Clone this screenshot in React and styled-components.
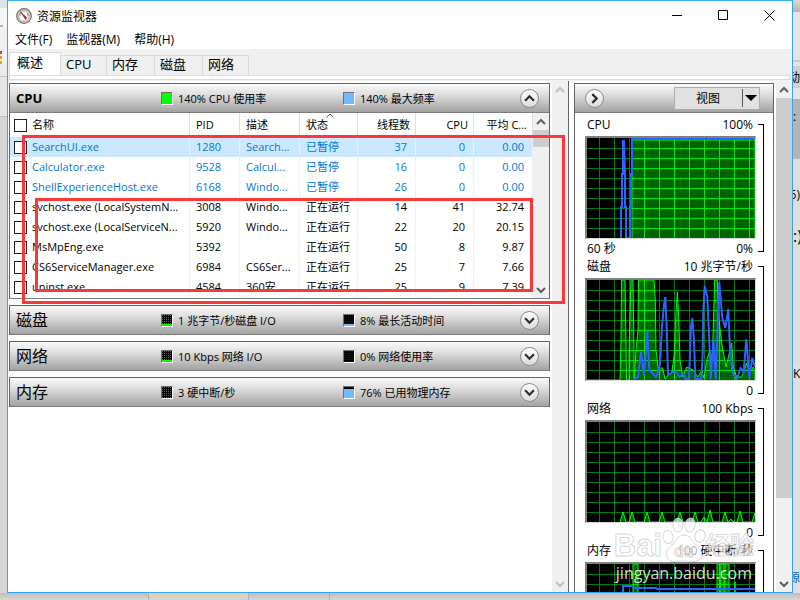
import React from 'react';
import styled, { createGlobalStyle, css } from 'styled-components';

const GlobalStyle = createGlobalStyle`
  * { box-sizing: border-box; }

  body {
    margin: 0;
    color: #000;
    font-family: "Open Sans", "Noto Sans CJK SC", sans-serif;
    font-size: 12px;
  }

  button {
    margin: 0;
    padding: 0;
    color: inherit;
    font: inherit;
  }
`;

const Desktop = styled.div`
  display: grid;
  grid-template-columns: 7px minmax(0, 1fr) 7px;
  grid-template-rows: minmax(0, 1fr) 7px;
  height: 100vh;
  overflow: hidden;
  background: #d6d6d6;
`;

const Strip = styled.div`
  display: flex;
  flex-direction: column;
  overflow: hidden;
`;

const StripPart = styled.div`
  flex: 0 0 auto;
  height: ${({ $height }) => $height}px;
  padding-top: ${({ $top }) => $top || 0}px;
  background: ${({ $bg }) => $bg};
  color: ${({ $color }) => $color || '#000'};
  font-size: ${({ $size }) => $size || 12}px;
  line-height: 20px;
  white-space: nowrap;
  overflow: hidden;
`;

const StripText = styled.span`
  display: flex;
  justify-content: ${({ $end }) => ($end ? 'flex-end' : 'flex-start')};
`;

const Shelf = styled.div`
  grid-column: 1 / -1;
  display: grid;
  grid-template-columns: 149px 100px 81px 1fr;
  background: linear-gradient(#bcbcbc, #d8d8d8);

  > span { border-right: 1px solid #b0b0b0; }
  > span:nth-child(2) { background: #d9d1c4; }
  > span:last-child { border: 0; }
`;

const Window = styled.main`
  position: relative;
  display: flex;
  flex-direction: column;
  min-height: 0;
  border: 1px solid #3aa5ec;
  background: #f0f0f0;
  overflow: hidden;
`;

const TitleBar = styled.header`
  display: flex;
  align-items: center;
  flex: 0 0 29px;
  padding-left: 8px;
  background: #fff;
`;

const Title = styled.h1`
  flex: 1;
  margin: 0 0 0 5px;
  font-size: 12px;
  font-weight: 400;
`;

const WindowButton = styled.button`
  display: flex;
  align-items: center;
  justify-content: center;
  width: 46px;
  height: 28px;
  border: 0;
  background: transparent;
`;

const MenuBar = styled.nav`
  display: flex;
  gap: 14px;
  flex: 0 0 19px;
  min-height: 0;
  padding-left: 7px;
  background: #fff;
`;

const MenuItem = styled.button`
  height: 19px;
  border: 0;
  background: transparent;
  line-height: 20px;
`;

const TabBand = styled.div`
  display: flex;
  align-items: flex-end;
  flex: 0 0 26px;
  padding-left: 1px;
`;

const Tab = styled.button`
  width: ${({ $width }) => $width}px;
  height: 20px;
  padding: 0 0 2px 5px;
  border: 1px solid #d9d9d9;
  border-left: 0;
  border-bottom: 0;
  background: #f0f0f0;
  font-size: 13px;
  line-height: 17px;
  text-align: left;

  &[aria-selected='true'] {
    height: 23px;
    padding: 0 0 4px 7px;
    border-left: 1px solid #d9d9d9;
    background: #fff;
  }
`;

const TabPage = styled.div`
  flex: 0 0 5px;
  margin: 0 2px 1px 1px;
  border: 1px solid #dcdcdc;
  background: #fff;
`;

const Content = styled.div`
  display: flex;
  flex: 1;
  min-height: 0;
  background: #fff;
`;

const LeftPane = styled.div`
  display: flex;
  flex: 1;
  min-width: 0;
  border-right: 1px solid #646464;
`;

const Sections = styled.div`
  display: flex;
  flex: 1;
  flex-direction: column;
  gap: 6px;
  min-width: 0;
  padding: 2px 2px 0 1px;
`;

const Section = styled.section`
  border: 1px solid #646464;
  border-bottom: 0;
`;

const barGradient = css`
  border-bottom: 1px solid #7c7c7c;
  background: linear-gradient(#fafafa, #e0e0e0 35%, #a2a2a2);
`;

const SectionBar = styled.div`
  display: grid;
  grid-template-columns: 145px 182px 1fr auto;
  align-items: center;
  height: 29px;
  padding: 0 10px 0 6px;
  ${barGradient}
`;

const SectionTitle = styled.h2`
  margin: 0;
  font-size: ${({ $strong }) => ($strong ? 13 : 16)}px;
  font-weight: ${({ $strong }) => ($strong ? 700 : 400)};
  line-height: 24px;
`;

const Legend = styled.span`
  display: flex;
  align-items: center;
  gap: 5px;
  font-size: 11px;
  white-space: nowrap;
`;

const Swatch = styled.i`
  width: 12px;
  height: 13px;
  border: 1px solid #fff;
  border-top-color: #707070;
  border-left-color: #707070;
  background:
    linear-gradient(to top, ${({ $color }) => $color} ${({ $level }) => $level}px, transparent 0),
    conic-gradient(#000 75%, transparent 0) 0 0 / 2px 2px,
    ${({ $dark }) => $dark};
`;

const RoundButton = styled.button`
  display: flex;
  align-items: center;
  justify-content: center;
  width: 19px;
  height: 19px;
  border: 1px solid #8a8a8a;
  border-radius: 50%;
  background: linear-gradient(#fff, #dadada);
  color: #2c2c2c;
`;

const ListArea = styled.div`
  display: flex;
  height: 186px;
  border-bottom: 1px solid #7c7c7c;
`;

const TableClip = styled.div`
  flex: 1;
  min-width: 0;
  overflow: hidden;
`;

const Table = styled.table`
  width: 100%;
  border-collapse: separate;
  border-spacing: 0;
  table-layout: fixed;
  font-size: 11px;
`;

const Cell = styled.td`
  height: 20px;
  padding: 0 ${({ $right }) => ($right ? 8 : 6)}px 0 6px;
  border-right: 1px solid #e8f1fa;
  line-height: 20px;
  text-align: ${({ $right }) => ($right ? 'right' : 'left')};
  white-space: nowrap;
  overflow: hidden;
  text-overflow: ellipsis;
`;

const HeadCell = styled(Cell)`
  position: relative;
  height: 24px;
  padding: 0 5px 0 6px;
  border-right-color: #e0e0e0;
  font-weight: 400;
  line-height: 24px;
`;

const NameCell = styled.label`
  display: flex;
  align-items: center;
  gap: 5px;
  margin-left: -2px;

  > span {
    overflow: hidden;
    text-overflow: ellipsis;
  }
`;

const Check = styled.input`
  appearance: none;
  flex: 0 0 13px;
  height: 13px;
  margin: 0;
  border: 1px solid #222;
  background: #fff;
`;

const Row = styled.tr`
  color: ${({ $paused }) => ($paused ? '#0078d7' : '#000')};
  background: ${({ $selected }) => ($selected ? '#cce8ff' : 'transparent')};
`;

const SortMark = styled.svg`
  position: absolute;
  top: 0;
  left: 26px;
`;

const Track = styled.div`
  display: flex;
  flex: 0 0 ${({ $width }) => $width}px;
  flex-direction: column;
  background: #f0f0f0;
`;

const Thumb = styled.div`
  flex: 0 0 ${({ $length }) => $length};
  background: #cdcdcd;
`;

const Arrow = styled.button`
  display: flex;
  align-items: center;
  justify-content: center;
  flex: 0 0 17px;
  border: 0;
  background: transparent;
  color: ${({ $dim }) => ($dim ? '#bfbfbf' : '#606060')};

  &:last-child { margin-top: auto; }
`;

const RightPane = styled.aside`
  display: flex;
  flex: 0 0 223px;
  gap: 2px;
  padding-left: 5px;
`;

const GraphPanel = styled.div`
  flex: 1;
  min-width: 0;
  margin-top: 2px;
  border: 1px solid #646464;
  border-bottom: 0;
  overflow: hidden;
`;

const GraphBar = styled.div`
  display: flex;
  align-items: center;
  justify-content: space-between;
  height: 29px;
  margin-bottom: 3px;
  padding: 0 13px 0 10px;
  ${barGradient}
`;

const ViewButton = styled.button`
  display: flex;
  align-items: center;
  width: 86px;
  height: 23px;
  border: 1px solid #adadad;
  background: #e1e1e1;

  > span:first-child { flex: 1; padding-right: 1px; }
`;

const ViewArrow = styled.span`
  display: flex;
  align-items: center;
  height: 18px;
  padding: 0 2px;
  border-left: 1px solid #555;
`;

const GraphBlock = styled.figure`
  display: flex;
  gap: 2px;
  margin: 0;
  padding: 0 9px 0 10px;
`;

const GraphMain = styled.div`
  flex: 1;
  min-width: 0;
`;

const GraphLabels = styled.div`
  display: flex;
  justify-content: space-between;
  height: ${({ $foot }) => ($foot ? 19 : 20)}px;
  padding: 0 3px 0 2px;
  line-height: ${({ $foot }) => ($foot ? 19 : 18)}px;
  white-space: nowrap;
`;

const GraphFrame = styled.div`
  height: 103px;
  border: 1px solid #dcdcdc;
  border-top: 2px solid #808080;
  border-left: 2px solid #808080;
  background: #000;

  > svg { display: block; width: 100%; height: 100px; }
`;

const Bracket = styled.div`
  width: 6px;
  margin: 8px 0 6px;
  border: 1px solid #000;
  border-left: 0;
`;

const Mark = styled.div`
  position: absolute;
  top: ${({ $top }) => $top}px;
  left: ${({ $left }) => $left}px;
  width: ${({ $width }) => $width}px;
  height: ${({ $height }) => $height}px;
  border: 3px solid #fb3737;
  pointer-events: none;
`;

const Watermark = styled.div`
  position: absolute;
  right: 38px;
  bottom: 9px;
  display: flex;
  flex-direction: column;
  align-items: center;
  color: rgba(255, 255, 255, 0.6);
  pointer-events: none;
`;

const Brand = styled.div`
  display: flex;
  align-items: flex-end;
  height: 46px;
  font-family: "Liberation Sans", "Noto Sans CJK SC", sans-serif;
  font-size: 31px;
  font-weight: 700;
  line-height: 34px;
  -webkit-text-stroke: 1px rgba(205, 205, 205, 0.8);

  > span:last-child { font-size: 24px; line-height: 34px; }
`;

const BrandUrl = styled.div`
  color: rgba(255, 255, 255, 0.85);
  font-size: 16px;
  line-height: 20px;
`;

const processes = [
  ['SearchUI.exe', '1280', 'Search...', '已暂停', '37', '0', '0.00'],
  ['Calculator.exe', '9528', 'Calcul...', '已暂停', '16', '0', '0.00'],
  ['ShellExperienceHost.exe', '6168', 'Windo...', '已暂停', '26', '0', '0.00'],
  ['svchost.exe (LocalSystemN...', '3008', 'Windo...', '正在运行', '14', '41', '32.74'],
  ['svchost.exe (LocalServiceN...', '5920', 'Windo...', '正在运行', '22', '20', '20.15'],
  ['MsMpEng.exe', '5392', '', '正在运行', '50', '8', '9.87'],
  ['CS6ServiceManager.exe', '6984', 'CS6Ser...', '正在运行', '25', '7', '7.66'],
  ['uninst.exe', '4584', '360安...', '正在运行', '25', '9', '7.39'],
];

const sections = [
  {
    title: '磁盘',
    first: { text: '1 兆字节/秒磁盘 I/O', color: '#00ff00', dark: '#00a000', level: 2 },
    second: { text: '8% 最长活动时间', color: '#74b8ff', dark: '#0000d0', level: 2 },
  },
  {
    title: '网络',
    first: { text: '10 Kbps 网络 I/O', color: '#00ff00', dark: '#00a000', level: 2 },
    second: { text: '0% 网络使用率', color: '#74b8ff', dark: '#0000d0', level: 0 },
  },
  {
    title: '内存',
    first: { text: '3 硬中断/秒', color: '#00ff00', dark: '#00a000', level: 0 },
    second: { text: '76% 已用物理内存', color: '#74b8ff', dark: '#0000d0', level: 9 },
  },
];

const netPeaks = [[36, 90], [45, 90], [60, 90], [75, 90], [93, 90], [108, 90], [117, 95], [123, 88], [138, 90], [144, 97], [153, 89], [168, 91]];

const graphs = [
  {
    id: 'cpu',
    name: 'CPU',
    max: '100%',
    time: '60 秒',
    min: '0%',
    area: '45,100 45,2 168,2 168,100',
    line: '34,100 34,69 35,69 35,36 36,36 36,3 37,3 38,36 38,69 39,69 39,100 43,100 43,69 44,69 44,36 45,36 45,1 168,1',
  },
  {
    id: 'disk',
    name: '磁盘',
    max: '10 兆字节/秒',
    min: '0',
    area: '0,100 33,100 34,62 34.5,0 38,0 39,62 39.5,100 42,100 42,70 44,0 46,0 47,70 47,99 49,70 51,50 51.5,0 67,0 68.3,20 69,70 70.3,80 71.3,88 75.7,88 78,99 81,95 84.7,93 87,77 89,33 90.3,12 91.7,37 93,80 95.7,97 99.7,87 106,90 111,97 114.7,90 117,98 119.7,80 123,70 125.3,80 127,23 127.7,0 130.3,0 131.7,37 134.7,63 139,87 144.7,63 146.3,87 149.7,97 154.7,97 159.7,83 163,92 166.3,87 168,92 168,100',
    line: '47,99 51,97 54,72 57,95 60.3,51 62.3,90 69,97 71,93 73,83 75,47 76.7,27 78.3,17 79.7,47 81,95 88,91 93,97 96,93 98.7,99 102,99 104,47 105.3,38 107,60 108.3,99 114.3,99 115.7,73 116.3,30 117.7,6 120.3,17 121.7,47 123.7,99 126.3,60 128.7,99 130.3,57 132.3,2 134,23 135.3,38 138.3,48 141.3,29 143,70 145.7,93 149.7,99 153.7,88 156.7,92 159.3,59 162.3,98 165.3,78 168,87',
  },
  {
    id: 'network',
    name: '网络',
    max: '100 Kbps',
    min: '0',
    area: netPeaks.map(([x, y]) => `${x - 3},100 ${x},${y} ${x + 3},100`).join(' '),
  },
  {
    id: 'memory',
    name: '内存',
    max: '100 硬中断/秒',
    min: '0',
    area: '0,100 46,100 46,0 51,0 51,100 130,100 130,0 133,0 133,100 134,0 137,0 137,100 138,0 142,0 142,100 147,100 148,18 149,100',
    line: '36,100 36,22 46,22 47,24 69,24 70,25 168,25',
  },
];

const chevrons = {
  up: 'M1 7 L5 3 L9 7',
  down: 'M1 3 L5 7 L9 3',
  right: 'M3 1 L7 5 L3 9',
};

function Chevron({ dir, size = 10, width = 2 }) {
  return (
    <svg width={size} height={size} viewBox="0 0 10 10" fill="none" stroke="currentColor" strokeWidth={width}>
      <path d={chevrons[dir]} />
    </svg>
  );
}

function ScrollBar({ width, thumb, dim }) {
  return (
    <Track $width={width}>
      <Arrow $dim={dim} aria-label="向上滚动"><Chevron dir="up" /></Arrow>
      {thumb && <Thumb $length={thumb} />}
      <Arrow $dim={dim} aria-label="向下滚动"><Chevron dir="down" /></Arrow>
    </Track>
  );
}

function LegendItem({ text, color, dark, level }) {
  return (
    <Legend>
      <Swatch $color={color} $dark={dark} $level={level} />
      {text}
    </Legend>
  );
}

function ResourceSection({ title, first, second, open, children }) {
  return (
    <Section>
      <SectionBar>
        <SectionTitle $strong={open}>{title}</SectionTitle>
        <LegendItem {...first} />
        <LegendItem {...second} />
        <RoundButton aria-label={title} aria-expanded={Boolean(open)}>
          <Chevron dir={open ? 'up' : 'down'} size={11} />
        </RoundButton>
      </SectionBar>
      {children}
    </Section>
  );
}

function ProcessTable() {
  return (
    <ListArea>
      <TableClip>
        <Table>
          <colgroup>
            <col style={{ width: 180 }} />
            <col style={{ width: 50 }} />
            <col style={{ width: 60 }} />
            <col />
            <col style={{ width: 58 }} />
            <col style={{ width: 58 }} />
            <col style={{ width: 59 }} />
          </colgroup>
          <thead>
            <tr>
              <HeadCell as="th">
                <NameCell><Check type="checkbox" /><span>名称</span></NameCell>
              </HeadCell>
              <HeadCell as="th">PID</HeadCell>
              <HeadCell as="th">描述</HeadCell>
              <HeadCell as="th">
                状态
                <SortMark width="8" height="5" viewBox="0 0 8 5" fill="none" stroke="#555">
                  <path d="M0.5 4.5 L4 1 L7.5 4.5" />
                </SortMark>
              </HeadCell>
              <HeadCell as="th" $right>线程数</HeadCell>
              <HeadCell as="th" $right>CPU</HeadCell>
              <HeadCell as="th" $right>平均 C...</HeadCell>
            </tr>
          </thead>
          <tbody>
            {processes.map(([name, pid, desc, state, threads, cpu, avg], i) => (
              <Row key={pid} $paused={state === '已暂停'} $selected={i === 0}>
                <Cell>
                  <NameCell><Check type="checkbox" /><span>{name}</span></NameCell>
                </Cell>
                <Cell>{pid}</Cell>
                <Cell>{desc}</Cell>
                <Cell>{state}</Cell>
                <Cell $right>{threads}</Cell>
                <Cell $right>{cpu}</Cell>
                <Cell $right>{avg}</Cell>
              </Row>
            ))}
          </tbody>
        </Table>
      </TableClip>
      <ScrollBar width={16} thumb="17px" />
    </ListArea>
  );
}

const columns = Array.from({ length: 11 }, (_, i) => 12 + i * 15);
const lines = Array.from({ length: 9 }, (_, i) => 10 + i * 10);
const gridPath = [
  ...columns.map((x) => `M${x + 0.5} 0V100`),
  ...lines.map((y) => `M0 ${y + 0.5}H168`),
].join('');

function Graph({ id, name, max, time, min, area, line }) {
  return (
    <GraphBlock>
      <GraphMain>
        <GraphLabels><span>{name}</span><span>{max}</span></GraphLabels>
        <GraphFrame>
          <svg viewBox="0 0 168 100" preserveAspectRatio="none" fill="none">
            <clipPath id={`area-${id}`}><polygon points={area} /></clipPath>
            <path d={gridPath} stroke="#007c16" />
            <polygon points={area} fill="#006400" />
            <path d={gridPath} stroke="#00e614" clipPath={`url(#area-${id})`} />
            <polyline points={area} stroke="#00ff00" />
            {line && <polyline points={line} stroke="#2f63ff" strokeWidth="2" />}
          </svg>
        </GraphFrame>
        <GraphLabels $foot><span>{time}</span><span>{min}</span></GraphLabels>
      </GraphMain>
      <Bracket />
    </GraphBlock>
  );
}

function AppIcon() {
  return (
    <svg width="16" height="16" viewBox="0 0 16 16">
      <circle cx="8" cy="8" r="7.3" fill="#d9d9d9" stroke="#6d6d6d" strokeWidth="1.2" />
      <circle cx="8" cy="8" r="5.3" fill="#fafafa" stroke="#9b9b9b" strokeWidth="0.8" />
      <path d="M4 8a4 4 0 0 1 1-3M11 5a4 4 0 0 1 1 3M8 3.4v1" stroke="#888" fill="none" />
      <path d="M4.4 3.6 L10.8 10 L9.6 11.3 Z" fill="#e01b1b" stroke="#b01010" strokeWidth="0.7" />
    </svg>
  );
}

function Paw() {
  return (
    <svg width="44" height="46" viewBox="0 0 44 46" fill="rgba(255,255,255,0.65)" stroke="rgba(205,205,205,0.8)">
      <ellipse cx="6" cy="20" rx="5" ry="6.5" transform="rotate(-15 6 20)" />
      <ellipse cx="16" cy="8" rx="5" ry="7" />
      <ellipse cx="28" cy="8" rx="5" ry="7" transform="rotate(8 28 8)" />
      <ellipse cx="38" cy="19" rx="5" ry="6.5" transform="rotate(15 38 19)" />
      <path d="M22 18c-6 0-8 6-12 10-4 3-7 7-5 12 2 6 9 4 17 4s14 2 17-3c2-6-1-9-5-13-4-4-6-10-12-10z" />
      <text x="12" y="40" fontSize="16" fontWeight="700" fill="none" fontFamily="Liberation Sans, sans-serif">du</text>
    </svg>
  );
}

export default function App() {
  return (
    <>
      <GlobalStyle />
      <Desktop>
        <Strip aria-hidden="true">
          <StripPart $height={8} $bg="#dbe3ea" />
          <StripPart $height={17} $bg="#f5f5f5" />
          <StripPart $height={2} $bg="linear-gradient(to right, #b5b5b5 50%, #f5f5f5 0)" />
          <StripPart $height={24} $bg="#f0f0f0" />
          <StripPart $height={3} $bg="linear-gradient(to right, #e53935 30%, #f0f0f0 0)" />
          <StripPart $height={2} $bg="#f0f0f0" />
          <StripPart $height={3} $bg="linear-gradient(to right, #e69a10 30%, #f0f0f0 0)" />
          <StripPart $height={2} $bg="#f0f0f0" />
          <StripPart $height={3} $bg="linear-gradient(to right, #e6a800 30%, #f0f0f0 0)" />
          <StripPart $height={12} $bg="#ececec" />
          <StripPart $height={1} $bg="#c4c4c4" />
          <StripPart $height={39} $bg="#e6e6e6" />
          <StripPart $height={1} $bg="#bcbcbc" />
        </Strip>
        <Window>
          <TitleBar>
            <AppIcon />
            <Title>资源监视器</Title>
            <WindowButton aria-label="最小化">
              <svg width="11" height="11"><path d="M0 5.5h10" stroke="#000" /></svg>
            </WindowButton>
            <WindowButton aria-label="最大化">
              <svg width="11" height="11"><path d="M0.5 0.5h9v9h-9z" fill="none" stroke="#000" /></svg>
            </WindowButton>
            <WindowButton aria-label="关闭">
              <svg width="11" height="11"><path d="M0.5 0.5l10 10M10.5 0.5l-10 10" stroke="#000" /></svg>
            </WindowButton>
          </TitleBar>
          <MenuBar>
            <MenuItem>文件(F)</MenuItem>
            <MenuItem>监视器(M)</MenuItem>
            <MenuItem>帮助(H)</MenuItem>
          </MenuBar>
          <TabBand role="tablist">
            <Tab role="tab" aria-selected="true" $width={52}>概述</Tab>
            <Tab role="tab" $width={46}>CPU</Tab>
            <Tab role="tab" $width={48}>内存</Tab>
            <Tab role="tab" $width={48}>磁盘</Tab>
            <Tab role="tab" $width={46}>网络</Tab>
          </TabBand>
          <TabPage />
          <Content>
            <LeftPane>
              <Sections>
                <ResourceSection
                  title="CPU"
                  open
                  first={{ text: '140% CPU 使用率', color: '#00ff00', dark: '#00a000', level: 12 }}
                  second={{ text: '140% 最大频率', color: '#74b8ff', dark: '#2f63ff', level: 12 }}
                >
                  <ProcessTable />
                </ResourceSection>
                {sections.map((section) => (
                  <ResourceSection key={section.title} {...section} />
                ))}
              </Sections>
              <ScrollBar width={16} dim />
            </LeftPane>
            <RightPane>
              <GraphPanel>
                <GraphBar>
                  <RoundButton aria-label="隐藏图表"><Chevron dir="right" size={11} /></RoundButton>
                  <ViewButton>
                    <span>视图</span>
                    <ViewArrow>
                      <svg width="12" height="6"><path d="M0 0h12L6 6z" /></svg>
                    </ViewArrow>
                  </ViewButton>
                </GraphBar>
                {graphs.map((graph) => <Graph key={graph.id} {...graph} />)}
              </GraphPanel>
              <ScrollBar width={16} thumb="400px" />
            </RightPane>
          </Content>
          <Mark $left={14} $top={134} $width={543} $height={169} />
          <Mark $left={27} $top={197} $width={498} $height={94} />
          <Watermark>
            <Brand><span>Bai</span><Paw /><span>经验</span></Brand>
            <BrandUrl>jingyan.baidu.com</BrandUrl>
          </Watermark>
        </Window>
        <Strip aria-hidden="true">
          <StripPart $height={12} $bg="linear-gradient(#d8d8d8, #b4b4b4)" />
          <StripPart $height={48} $bg="#e4e4e4" />
          <StripPart $height={2} $bg="#c8c8c8" />
          <StripPart $height={4} $bg="#e4e4e4" />
          <StripPart $height={22} $top={2} $bg="#cfcfcf"><StripText $end>启动</StripText></StripPart>
          <StripPart $height={11} $bg="#e4e4e4" />
          <StripPart $height={60} $top={8} $bg="#b4b4b4"><StripText>:</StripText></StripPart>
          <StripPart $height={67} $top={26} $bg="#dedede"><StripText $end>6)</StripText></StripPart>
          <StripPart $height={138} $bg="#dedede" $size={16}><StripText>:)</StripText></StripPart>
          <StripPart $height={204} $bg="#e0e0e0"><StripText>K</StripText></StripPart>
          <StripPart $height={25} $bg="#e0e0e0" $color="#2468b0"><StripText $end>资源</StripText></StripPart>
        </Strip>
        <Shelf aria-hidden="true"><span /><span /><span /><span /></Shelf>
      </Desktop>
    </>
  );
}
